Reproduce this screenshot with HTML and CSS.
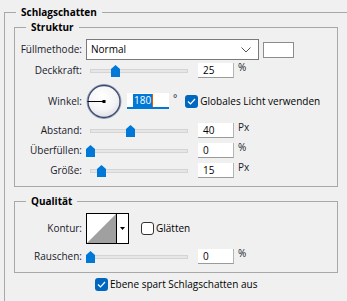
FILE: index.html
```html
<!DOCTYPE html>
<html lang="de">
<head>
    <meta charset="UTF-8">
    <title>Schlagschatten</title>
    <link rel="stylesheet" href="styles.css">
</head>
<body>
    <fieldset class="group outer">
        <legend>Schlagschatten</legend>

        <fieldset class="group inner">
            <legend>Struktur</legend>

            <div class="row row-mode">
                <span class="lbl">Füllmethode:</span>
                <div class="select">
                    <span>Normal</span>
                    <svg class="chevron" width="10" height="6" viewBox="0 0 10 6"><path d="M0.5 0.5 L5 5 L9.5 0.5" fill="none" stroke="#555" stroke-width="1"/></svg>
                </div>
                <div class="swatch"></div>
            </div>

            <div class="row row-field">
                <span class="lbl">Deckkraft:</span>
                <div class="slider">
                    <div class="track"></div>
                    <svg class="thumb" style="left: 25px" width="9" height="12" viewBox="0 0 9 12"><path d="M0 4 L4.5 0 L9 4 L9 12 L0 12 Z" fill="#0078d7"/></svg>
                </div>
                <div class="field">25</div>
                <span class="unit">%</span>
            </div>

            <div class="row row-angle">
                <span class="lbl">Winkel:</span>
                <svg class="dial" width="36" height="37" viewBox="0 0 36 37">
                    <defs>
                        <radialGradient id="dialFill" cx="0.45" cy="0.35" r="0.7">
                            <stop offset="0" stop-color="#ffffff"/>
                            <stop offset="0.6" stop-color="#f4f4f6"/>
                            <stop offset="1" stop-color="#d6d8de"/>
                        </radialGradient>
                    </defs>
                    <circle cx="18" cy="18.5" r="17" fill="url(#dialFill)" stroke="#9aa3bb" stroke-width="1"/>
                    <circle cx="18" cy="18.5" r="16" fill="none" stroke="#3e4a70" stroke-width="1.3"/>
                    <line x1="1.5" y1="18.5" x2="18" y2="18.5" stroke="#000" stroke-width="1"/>
                    <rect x="16.5" y="17" width="3" height="3" fill="#000"/>
                </svg>
                <div class="field angle"><span class="sel">180</span><span class="caret"></span></div>
                <span class="deg">°</span>
                <span class="check on">
                    <svg width="9" height="7" viewBox="0 0 9 7"><path d="M1 3.5 L3.5 6 L8 1" fill="none" stroke="#fff" stroke-width="1.2"/></svg>
                </span>
                <span class="check-text">Globales Licht verwenden</span>
            </div>

            <div class="row row-field row-dist">
                <span class="lbl">Abstand:</span>
                <div class="slider">
                    <div class="track"></div>
                    <svg class="thumb" style="left: 40px" width="9" height="12" viewBox="0 0 9 12"><path d="M0 4 L4.5 0 L9 4 L9 12 L0 12 Z" fill="#0078d7"/></svg>
                </div>
                <div class="field">40</div>
                <span class="unit">Px</span>
            </div>

            <div class="row row-field">
                <span class="lbl">Überfüllen:</span>
                <div class="slider">
                    <div class="track"></div>
                    <svg class="thumb" style="left: 0px" width="9" height="12" viewBox="0 0 9 12"><path d="M0 4 L4.5 0 L9 4 L9 12 L0 12 Z" fill="#0078d7"/></svg>
                </div>
                <div class="field">0</div>
                <span class="unit">%</span>
            </div>

            <div class="row row-field">
                <span class="lbl">Größe:</span>
                <div class="slider">
                    <div class="track"></div>
                    <svg class="thumb" style="left: 11px" width="9" height="12" viewBox="0 0 9 12"><path d="M0 4 L4.5 0 L9 4 L9 12 L0 12 Z" fill="#0078d7"/></svg>
                </div>
                <div class="field">15</div>
                <span class="unit">Px</span>
            </div>
        </fieldset>

        <fieldset class="group inner quality">
            <legend>Qualität</legend>

            <div class="row row-contour">
                <span class="lbl">Kontur:</span>
                <div class="contour">
                    <svg width="43" height="31" viewBox="0 0 43 31">
                        <rect x="0.5" y="0.5" width="42" height="30" fill="#fff" stroke="#000"/>
                        <path d="M1 30 L30 1 L30 30 Z" fill="#a0a0a0"/>
                        <line x1="30.5" y1="1" x2="30.5" y2="30" stroke="#000"/>
                        <path d="M34 14 L39 14 L36.5 17 Z" fill="#000"/>
                    </svg>
                </div>
                <span class="check off"></span>
                <span class="check-text">Glätten</span>
            </div>

            <div class="row row-field">
                <span class="lbl">Rauschen:</span>
                <div class="slider">
                    <div class="track"></div>
                    <svg class="thumb" style="left: 0px" width="9" height="12" viewBox="0 0 9 12"><path d="M0 4 L4.5 0 L9 4 L9 12 L0 12 Z" fill="#0078d7"/></svg>
                </div>
                <div class="field">0</div>
                <span class="unit">%</span>
            </div>
        </fieldset>

        <div class="row row-knockout">
            <span class="check on">
                <svg width="9" height="7" viewBox="0 0 9 7"><path d="M1 3.5 L3.5 6 L8 1" fill="none" stroke="#fff" stroke-width="1.2"/></svg>
            </span>
            <span class="check-text">Ebene spart Schlagschatten aus</span>
        </div>
    </fieldset>
</body>
</html>
```

FILE: styles.css
```css
* {
    box-sizing: border-box;
}

body {
    margin: 0;
    height: 301px;
    overflow: hidden;
    background-color: #f0f0f0;
    font-family: 'Open Sans', 'Liberation Sans', sans-serif;
    font-size: 10px;
    line-height: 15px;
    color: #1a1a2a;
}

/* group boxes */

.group {
    margin: 0;
    padding: 0;
    border: 1px solid #a8a8a8;
    min-width: 0;
}

.group legend {
    padding: 0 5px;
    font-weight: 700;
    font-size: 10px;
    line-height: 14px;
    color: #000;
}

.outer {
    width: 343px;
    height: 296px;
    margin: 5px 0 0 4px;
    padding-left: 9px;
    border-right: none;
    border-bottom: none;
}

.outer > legend {
    margin-left: 2px;
}

.inner {
    width: 324px;
    margin-top: 1px;
    padding-bottom: 8px;
}

.inner > legend {
    margin-left: 11px;
}

.quality {
    margin-top: 7px;
}

/* rows */

.row {
    display: flex;
    align-items: center;
    margin-top: 5px;
}

.lbl {
    width: 67px;
    margin-right: 4px;
    text-align: right;
    white-space: nowrap;
}

.row-mode {
    height: 21px;
}

.row-field {
    height: 15px;
}

.row-mode + .row-field {
    margin-top: 3px;
}

.row-angle {
    height: 36px;
}

.row-dist {
    margin-top: 4px;
}

.row-contour {
    height: 31px;
}

.row-knockout {
    height: 13px;
    margin-left: 81px;
}

/* blend mode select */

.select {
    width: 173px;
    height: 21px;
    display: flex;
    align-items: center;
    justify-content: space-between;
    padding: 0 4px 0 4px;
    background: #fff;
    border: 1px solid #7a7a7a;
    color: #000;
}

.chevron {
    margin-right: 3px;
}

.swatch {
    width: 31px;
    height: 16px;
    margin-left: 4px;
    background: #fff;
    border: 1px solid #8c8c8c;
}

/* sliders */

.slider {
    position: relative;
    width: 106px;
    height: 15px;
}

.track {
    position: absolute;
    left: 4px;
    right: 4px;
    top: 6px;
    height: 4px;
    background: #e6e6e6;
    border: 1px solid #d4d4d4;
}

.thumb {
    position: absolute;
    top: 2px;
    display: block;
}

.field {
    width: 36px;
    height: 15px;
    margin-left: 6px;
    padding-left: 5px;
    background: #fff;
    border-right: 1px solid #b4b4b4;
    border-bottom: 1px solid #9a9a9a;
    color: #000;
    line-height: 14px;
}

.unit {
    margin-left: 4px;
    align-self: flex-start;
    margin-top: -3px;
}

/* angle */

.dial {
    display: block;
}

.angle {
    width: 42px;
    height: 16px;
    margin-left: 5px;
    padding-left: 6px;
    border-right: none;
    border-bottom: 2px solid #0078d7;
    display: flex;
    align-items: center;
}

.sel {
    background: #0078d7;
    color: #fff;
    padding: 0 1px;
    line-height: 13px;
}

.caret {
    width: 1px;
    height: 13px;
    background: #e05a00;
}

.deg {
    margin-left: 4px;
    align-self: flex-start;
    margin-top: 8px;
}

/* checkboxes */

.check {
    width: 13px;
    height: 13px;
    border-radius: 3px;
    display: flex;
    align-items: center;
    justify-content: center;
    flex-shrink: 0;
}

.check.on {
    background: #0067c0;
}

.check.off {
    background: #fff;
    border: 1px solid #333;
}

.row-angle .check {
    margin-left: 8px;
}

.row-contour .check {
    margin-left: 12px;
}

.check-text {
    margin-left: 2px;
    white-space: nowrap;
    color: #000;
}

.contour svg {
    display: block;
}
```
